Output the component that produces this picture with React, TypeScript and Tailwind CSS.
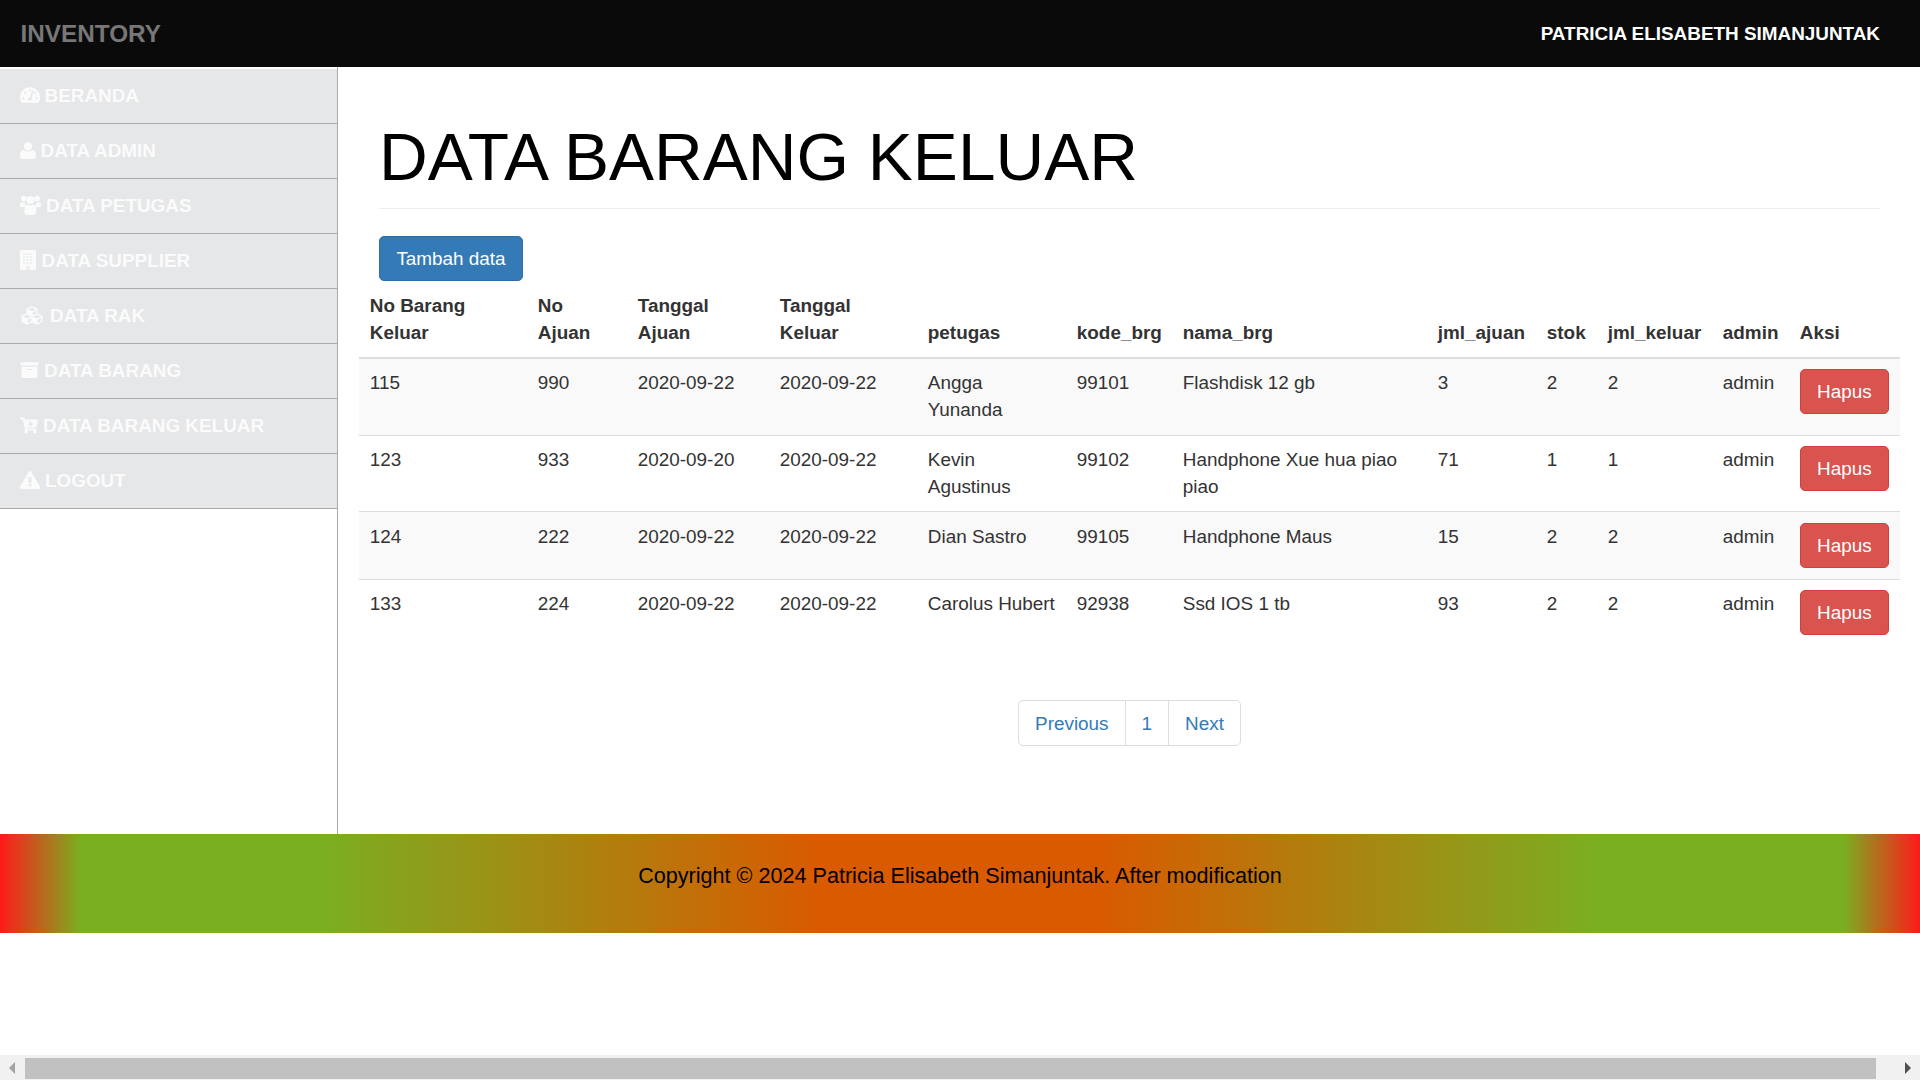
import React from 'react';
import {
  FaArchive,
  FaCartArrowDown,
  FaCubes,
  FaExclamationTriangle,
  FaTachometerAlt,
} from 'react-icons/fa';

const UserIcon = ({ className }: { className?: string }) => (
  <svg className={className} viewBox="0 0 16 17" fill="currentColor">
    <circle cx="8" cy="4.4" r="4.2" />
    <path d="M0 14c0-3.5 1.2-6 3.6-6 1.1 1 2.7 1.6 4.4 1.6s3.300-.6 4.400-1.600c2.400 0 3.600 2.500 3.600 6 0 2-1.300 3-3 3H3c-1.700 0-3-1-3-3z" />
  </svg>
);

const UsersIcon = ({ className }: { className?: string }) => (
  <svg className={className} viewBox="0 0 21 20" fill="currentColor">
    <circle cx="3.800" cy="3.600" r="2.800" />
    <circle cx="17.200" cy="3.600" r="2.800" />
    <circle cx="10.500" cy="5" r="4" />
    <path d="M0 10.500c0-2.500 1-3.500 2-3.500 .8.700 2 1.200 3 1-.3 1.300.2 3 1.300 4H2c-1.200 0-2-.4-2-1.500z" />
    <path d="M21 10.500c0-2.500-1-3.500-2-3.500-.8.700-2 1.200-3 1 .3 1.300-.2 3-1.300 4H19c1.200 0 2-.4 2-1.500z" />
    <path d="M4.500 16c0-3.500 1-6 3-6.500 1.500 1.200 4.500 1.200 6 0 2 .5 3 3 3 6.500 0 2.500-1.500 4-3.500 4h-5.500c-2 0-3.500-1.500-3.500-4z" />
  </svg>
);

const BuildingIcon = ({ className }: { className?: string }) => (
  <svg className={className} viewBox="0 0 16 20">
    <rect width="16" height="20" rx="0.5" fill="currentColor" />
    <g fill="#e5e7e9">
      {[3, 6, 9, 12].map((y) =>
        [3, 6.500, 10].map((x) => <rect key={`${x}-${y}`} x={x} y={y} width="2" height="2" opacity="0.6" />),
      )}
      <rect x="6" y="16" width="4" height="4" opacity="0.6" />
    </g>
  </svg>
);

const menu = [
  { label: 'BERANDA', icon: FaTachometerAlt, iconClass: 'w-[20px] h-[18px]', gap: 'gap-[4.5px]' },
  { label: 'DATA ADMIN', icon: UserIcon, iconClass: 'w-[16px] h-[17px]', gap: 'gap-[4.5px]' },
  { label: 'DATA PETUGAS', icon: UsersIcon, iconClass: 'w-[21px] h-[20px]', gap: 'gap-[5px]' },
  { label: 'DATA SUPPLIER', icon: BuildingIcon, iconClass: 'w-[16px] h-[20px]', gap: 'gap-[5.5px]' },
  { label: 'DATA RAK', icon: FaCubes, iconClass: 'w-[24px] h-[21px]', gap: 'gap-[6px]' },
  { label: 'DATA BARANG', icon: FaArchive, iconClass: 'w-[19px] h-[18px]', gap: 'gap-[5px]' },
  { label: 'DATA BARANG KELUAR', icon: FaCartArrowDown, iconClass: 'w-[18px] h-[17px]', gap: 'gap-[5px]' },
  { label: 'LOGOUT', icon: FaExclamationTriangle, iconClass: 'w-[20px] h-[18px]', gap: 'gap-[5px]' },
];

const rows = [
  ['115', '990', '2020-09-22', '2020-09-22', 'Angga Yunanda', '99101', 'Flashdisk 12 gb', '3', '2', '2', 'admin'],
  ['123', '933', '2020-09-20', '2020-09-22', 'Kevin Agustinus', '99102', 'Handphone Xue hua piao piao', '71', '1', '1', 'admin'],
  ['124', '222', '2020-09-22', '2020-09-22', 'Dian Sastro', '99105', 'Handphone Maus', '15', '2', '2', 'admin'],
  ['133', '224', '2020-09-22', '2020-09-22', 'Carolus Hubert', '92938', 'Ssd IOS 1 tb', '93', '2', '2', 'admin'],
];

const Th = ({ className, children }: { className: string; children: React.ReactNode }) => (
  <th className={`${className} px-[10.8px] pt-[11px] pb-[11px] text-left align-bottom font-bold border-b-2 border-[#ddd]`}>
    {children}
  </th>
);

export default function App() {
  return (
    <div className="h-screen overflow-hidden flex flex-col bg-white text-[18.9px] leading-[27px] text-[#333] font-['Liberation_Sans',Arial,sans-serif]">
      <header className="h-[67px] shrink-0 bg-[#0a0a0a] flex items-center justify-between pl-[20.5px] pr-[40px]">
        <span className="text-[24.3px] font-bold text-[#777]">INVENTORY</span>
        <span className="font-bold text-white">PATRICIA ELISABETH SIMANJUNTAK</span>
      </header>

      <div className="flex h-[767px] shrink-0">
        <aside className="w-[338px] shrink-0 border-r border-[#aaa] pt-[2px]">
          {menu.map((item) => {
            const Icon = item.icon;
            return (
              <a
                key={item.label}
                className={`h-[55px] pl-[20px] pb-[2px] flex items-center ${item.gap} bg-[#e5e7e9] border-b border-[#aaa] text-[#fbfbfb] font-bold`}
              >
                <Icon className={item.iconClass} />
                <span>{item.label}</span>
              </a>
            );
          })}
        </aside>

        <main className="flex-1 min-w-0 pl-[21px] pr-[20px]">
          <div className="mx-[20px] pt-[52px] pb-[13px] border-b border-[#eee]">
            <h1 className="text-[67.5px] leading-[76px] font-normal text-black">DATA BARANG KELUAR</h1>
          </div>

          <button className="mt-[27px] ml-[20px] h-[45px] w-[144px] rounded-[5px] bg-[#337ab7] border border-[#2e6da4] text-white block">
            Tambah data
          </button>

          <table className="w-[1541px] table-fixed border-collapse">
            <thead>
              <tr>
                <Th className="w-[168px]">No Barang Keluar</Th>
                <Th className="w-[100px]">No Ajuan</Th>
                <Th className="w-[142px]">Tanggal Ajuan</Th>
                <Th className="w-[148px]">Tanggal Keluar</Th>
                <Th className="w-[149px]">petugas</Th>
                <Th className="w-[106px]">kode_brg</Th>
                <Th className="w-[255px]">nama_brg</Th>
                <Th className="w-[109px]">jml_ajuan</Th>
                <Th className="w-[61px]">stok</Th>
                <Th className="w-[115px]">jml_keluar</Th>
                <Th className="w-[77px]">admin</Th>
                <Th className="w-[111px]">Aksi</Th>
              </tr>
            </thead>
            <tbody>
              {rows.map((row, i) => (
                <tr key={row[0]} className={`border-b border-[#ddd] last:border-b-0 ${i % 2 === 0 && i < 3 ? 'bg-[#f9f9f9]' : ''}`}>
                  {row.map((cell, j) => (
                    <td key={j} className="px-[10.8px] pt-[10.4px] pb-[11.2px] align-top">
                      {cell}
                    </td>
                  ))}
                  <td className="px-[10.8px] pt-[10.4px] pb-[11.2px] align-top">
                    <button className="w-[89px] h-[45px] rounded-[5px] bg-[#d9534f] border border-[#d43f3a] text-white block">
                      Hapus
                    </button>
                  </td>
                </tr>
              ))}
            </tbody>
          </table>

          <nav className="mt-[54px] flex justify-center">
            <div className="flex h-[46px] rounded-[5px] border border-[#ddd] text-[#337ab7] items-stretch">
              <a className="px-[16px] flex items-center border-r border-[#ddd]">Previous</a>
              <a className="px-[16px] flex items-center border-r border-[#ddd]">1</a>
              <a className="px-[16px] flex items-center">Next</a>
            </div>
          </nav>
        </main>
      </div>

      <footer className="h-[99px] shrink-0 flex items-center justify-center pb-[16px] text-[21.6px] text-black bg-[linear-gradient(to_right,#ff1a1a_0%,#7aaf21_4.2%,#7aaf21_16.7%,#da5a00_42.7%,#da5a00_57.3%,#7aaf21_83.3%,#7aaf21_96%,#ff1a1a_100%)]">
        Copyright © 2024 Patricia Elisabeth Simanjuntak. After modification
      </footer>

      <div className="flex-1" />

      {/* horizontal scrollbar of the window */}
      <div className="h-[25px] shrink-0 bg-[#f1f1f1] flex items-center">
        <div className="w-[25px] flex justify-center">
          <svg width="7" height="12" viewBox="0 0 7 12"><path d="M6 0v12L0 6z" fill="#a3a3a3" /></svg>
        </div>
        <div className="flex-1 h-[21px] mt-[2px] bg-[#c1c1c1]" />
        <div className="w-[44px] flex justify-end pr-[8px]">
          <svg width="7" height="12" viewBox="0 0 7 12"><path d="M0 0v12l6-6z" fill="#505050" /></svg>
        </div>
      </div>
    </div>
  );
}
